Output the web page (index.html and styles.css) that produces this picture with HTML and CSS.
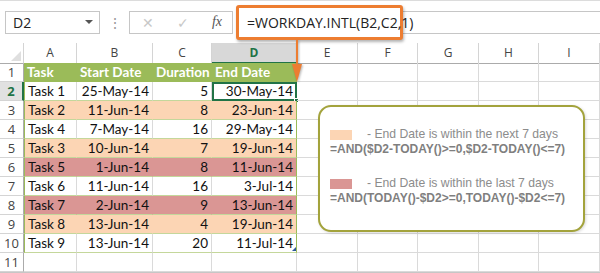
FILE: index.html
```html
<html lang="en">
<head>
    <meta charset="UTF-8">
    <title>WORKDAY.INTL conditional formatting</title>
    <link rel="stylesheet" href="styles.css">
</head>
<body>

    <!-- Formula bar -->
    <div class="formula-bar">
        <div class="name-box">
            <span>D2</span>
            <span class="caret"></span>
        </div>
        <div class="grip">⋮</div>
        <div class="fx-buttons">
            <span class="fx-btn">✕</span>
            <span class="fx-btn">✓</span>
            <span class="fx-btn fx">fx</span>
        </div>
        <div class="formula-input">
            <div class="formula-highlight">=WORKDAY.INTL(B2,C2,1)</div>
        </div>
    </div>

    <!-- Sheet -->
    <div class="sheet">
        <div class="row head-row">
            <div class="corner"><span class="corner-tri"></span></div>
            <div class="col-head">A</div>
            <div class="col-head">B</div>
            <div class="col-head">C</div>
            <div class="col-head active">D</div>
            <div class="col-head">E</div>
            <div class="col-head">F</div>
            <div class="col-head">G</div>
            <div class="col-head">H</div>
            <div class="col-head">I</div>
        </div>

        <div class="row">
            <div class="row-num">1</div>
            <div class="cell th">Task</div>
            <div class="cell th">Start Date</div>
            <div class="cell th">Duration</div>
            <div class="cell th th-last">End Date</div>
            <div class="cell"></div><div class="cell"></div><div class="cell"></div><div class="cell"></div><div class="cell"></div>
        </div>

        <div class="row">
            <div class="row-num active">2</div>
            <div class="cell td first">Task 1</div>
            <div class="cell td num">25-May-14</div>
            <div class="cell td num">5</div>
            <div class="cell td num last selected">30-May-14<span class="handle"></span></div>
            <div class="cell"></div><div class="cell"></div><div class="cell"></div><div class="cell"></div><div class="cell"></div>
        </div>

        <div class="row next">
            <div class="row-num">3</div>
            <div class="cell td first">Task 2</div>
            <div class="cell td num">11-Jun-14</div>
            <div class="cell td num">8</div>
            <div class="cell td num last">23-Jun-14</div>
            <div class="cell"></div><div class="cell"></div><div class="cell"></div><div class="cell"></div><div class="cell"></div>
        </div>

        <div class="row">
            <div class="row-num">4</div>
            <div class="cell td first">Task 4</div>
            <div class="cell td num">7-May-14</div>
            <div class="cell td num">16</div>
            <div class="cell td num last">29-May-14</div>
            <div class="cell"></div><div class="cell"></div><div class="cell"></div><div class="cell"></div><div class="cell"></div>
        </div>

        <div class="row next">
            <div class="row-num">5</div>
            <div class="cell td first">Task 3</div>
            <div class="cell td num">10-Jun-14</div>
            <div class="cell td num">7</div>
            <div class="cell td num last">19-Jun-14</div>
            <div class="cell"></div><div class="cell"></div><div class="cell"></div><div class="cell"></div><div class="cell"></div>
        </div>

        <div class="row last-week">
            <div class="row-num">6</div>
            <div class="cell td first">Task 5</div>
            <div class="cell td num">1-Jun-14</div>
            <div class="cell td num">8</div>
            <div class="cell td num last">11-Jun-14</div>
            <div class="cell"></div><div class="cell"></div><div class="cell"></div><div class="cell"></div><div class="cell"></div>
        </div>

        <div class="row">
            <div class="row-num">7</div>
            <div class="cell td first">Task 6</div>
            <div class="cell td num">11-Jun-14</div>
            <div class="cell td num">16</div>
            <div class="cell td num last">3-Jul-14</div>
            <div class="cell"></div><div class="cell"></div><div class="cell"></div><div class="cell"></div><div class="cell"></div>
        </div>

        <div class="row last-week">
            <div class="row-num">8</div>
            <div class="cell td first">Task 7</div>
            <div class="cell td num">2-Jun-14</div>
            <div class="cell td num">9</div>
            <div class="cell td num last">13-Jun-14</div>
            <div class="cell"></div><div class="cell"></div><div class="cell"></div><div class="cell"></div><div class="cell"></div>
        </div>

        <div class="row next">
            <div class="row-num">9</div>
            <div class="cell td first">Task 8</div>
            <div class="cell td num">13-Jun-14</div>
            <div class="cell td num">4</div>
            <div class="cell td num last">19-Jun-14</div>
            <div class="cell"></div><div class="cell"></div><div class="cell"></div><div class="cell"></div><div class="cell"></div>
        </div>

        <div class="row">
            <div class="row-num">10</div>
            <div class="cell td first">Task 9</div>
            <div class="cell td num">13-Jun-14</div>
            <div class="cell td num">20</div>
            <div class="cell td num last">11-Jul-14<span class="resize"></span></div>
            <div class="cell"></div><div class="cell"></div><div class="cell"></div><div class="cell"></div><div class="cell"></div>
        </div>

        <div class="row">
            <div class="row-num">11</div>
            <div class="cell"></div><div class="cell"></div><div class="cell"></div><div class="cell"></div>
            <div class="cell"></div><div class="cell"></div><div class="cell"></div><div class="cell"></div><div class="cell"></div>
        </div>

        <div class="scrollbar"><span class="thumb"></span></div>
    </div>

    <!-- Arrow from formula to the active cell -->
    <svg class="arrow" width="16" height="46" viewBox="0 0 16 46">
        <line x1="8" y1="0" x2="8" y2="30" stroke="#ed7d31" stroke-width="2"/>
        <polygon points="3,24 13,24 8,42" fill="#ed7d31"/>
    </svg>

    <!-- Legend callout -->
    <div class="callout">
        <div class="legend">
            <div class="legend-line"><span class="swatch peach"></span>- End Date is within the next 7 days</div>
            <div class="legend-formula">=AND($D2-TODAY()&gt;=0,$D2-TODAY()&lt;=7)</div>
        </div>
        <div class="legend">
            <div class="legend-line"><span class="swatch pink"></span>- End Date is within the last 7 days</div>
            <div class="legend-formula">=AND(TODAY()-$D2&gt;=0,TODAY()-$D2&lt;=7)</div>
        </div>
    </div>

</body>
</html>
```

FILE: styles.css
```css
/* Basic Reset */
* {
    margin: 0;
    padding: 0;
    box-sizing: border-box;
}

body {
    width: 600px;
    height: 273px;
    overflow: hidden;
    position: relative;
    background-color: #fff;
    border-top: 1px solid #dcdcdc;
    font-family: "Open Sans", Arial, sans-serif;
}

/* Formula Bar */
.formula-bar {
    display: flex;
    align-items: center;
    height: 42px;
    padding-left: 5px;
}

.name-box {
    display: flex;
    align-items: center;
    justify-content: space-between;
    width: 95px;
    height: 23px;
    border: 1px solid #c6c6c6;
    padding: 0 6px 0 7px;
    font-size: 14px;
    color: #222;
}

.caret {
    width: 0;
    height: 0;
    border-left: 4px solid transparent;
    border-right: 4px solid transparent;
    border-top: 4px solid #555;
}

.grip {
    width: 29px;
    text-align: center;
    color: #999;
    font-size: 14px;
}

.fx-buttons {
    display: flex;
    align-items: center;
    justify-content: space-between;
    width: 104px;
    height: 23px;
    border: 1px solid #c6c6c6;
    padding: 0 10px 0 12px;
}

.fx-btn {
    font-size: 14px;
    color: #c8c8c8;
}

.fx {
    font-family: "Liberation Serif", serif;
    font-style: italic;
    font-size: 14px;
    color: #555;
}

.formula-input {
    flex: 1;
    height: 23px;
    margin-left: 3px;
    border-top: 1px solid #c6c6c6;
    border-bottom: 1px solid #c6c6c6;
    position: relative;
}

.formula-highlight {
    position: absolute;
    left: 0;
    top: -7px;
    width: 167px;
    height: 35px;
    border: 3px solid #ed7d31;
    border-radius: 3px;
    background-color: #fff;
    box-shadow: 1px 2px 3px rgba(0, 0, 0, 0.3);
    padding-left: 8px;
    font-size: 14px;
    line-height: 29px;
    color: #222;
}

/* Sheet Grid */
.row {
    display: grid;
    grid-template-columns: 24px 53px 76px 59px 85px 61px 60px 61px 60px 61px;
    height: 19px;
}

.head-row {
    height: 20px;
}

.corner {
    position: relative;
    border-right: 1px solid #d4d4d4;
    border-bottom: 1px solid #ababab;
}

.corner-tri {
    position: absolute;
    right: 2px;
    bottom: 2px;
    width: 0;
    height: 0;
    border-left: 10px solid transparent;
    border-bottom: 10px solid #dfdfdf;
}

.col-head {
    border-right: 1px solid #d4d4d4;
    border-bottom: 1px solid #ababab;
    text-align: center;
    font-size: 12px;
    line-height: 19px;
    color: #444;
}

.col-head.active {
    background-color: #d8d8d8;
    color: #217346;
    font-weight: bold;
    border-bottom: 2px solid #217346;
}

.row-num {
    border-right: 1px solid #ababab;
    border-bottom: 1px solid #d4d4d4;
    text-align: center;
    font-size: 13px;
    line-height: 18px;
    color: #444;
}

.row-num.active {
    background-color: #e1e1e1;
    color: #217346;
    font-weight: bold;
    border-right: 2px solid #217346;
}

.cell {
    border-right: 1px solid #dadada;
    border-bottom: 1px solid #dadada;
    font-family: Lato, "Liberation Sans", sans-serif;
    font-size: 13.5px;
    line-height: 18px;
    color: #111;
    white-space: nowrap;
    position: relative;
}

/* Table Styling */
.th {
    background-color: #9bbb59;
    color: #fff;
    font-weight: bold;
    border-right: none;
    border-bottom: 1px solid #9bbb59;
    padding-left: 3px;
}

.th-last {
    border-right: 1px solid #9bbb59;
}

.td {
    border-bottom: 1px solid #c4d79b;
    padding: 0 3px;
}

.td.first {
    border-left: 1px solid #9bbb59;
}

.td.last {
    border-right: 1px solid #9bbb59;
}

.num {
    text-align: right;
}

.next .td {
    background-color: #fcd5b4;
    border-right-color: #fcd5b4;
}

.last-week .td {
    background-color: #da9694;
    border-right-color: #da9694;
}

.next .td.last,
.last-week .td.last {
    border-right-color: #9bbb59;
}

.selected {
    outline: 2px solid #217346;
    outline-offset: -2px;
}

.handle {
    position: absolute;
    right: -3px;
    bottom: -3px;
    width: 5px;
    height: 5px;
    background-color: #217346;
    border: 1px solid #fff;
}

.resize {
    position: absolute;
    right: 0;
    bottom: 1px;
    width: 0;
    height: 0;
    border-left: 4px solid transparent;
    border-bottom: 4px solid #2b579a;
}

.scrollbar {
    height: 4px;
    background-color: #f0f0f0;
    border-top: 1px solid #c6c6c6;
    position: relative;
}

.thumb {
    position: absolute;
    left: 140px;
    top: 0;
    width: 420px;
    height: 3px;
    background-color: #dcdcdc;
}

/* Arrow */
.arrow {
    position: absolute;
    left: 289px;
    top: 39px;
    filter: drop-shadow(1px 1px 1px rgba(0, 0, 0, 0.3));
}

/* Callout Styling */
.callout {
    position: absolute;
    left: 318px;
    top: 104px;
    width: 267px;
    height: 127px;
    background-color: #fff;
    border: 2px solid #a3a33c;
    border-radius: 13px;
    box-shadow: 1px 1px 3px rgba(0, 0, 0, 0.15);
    padding: 20px 0 0 10px;
    font-family: "Liberation Sans", Arial, sans-serif;
    color: #8c8c8c;
}

.legend {
    margin-bottom: 19px;
}

.legend-line {
    display: flex;
    align-items: center;
    font-size: 12.2px;
    line-height: 15px;
}

.swatch {
    width: 22px;
    height: 10px;
    margin-right: 15px;
}

.peach {
    background-color: #fcd5b4;
}

.pink {
    background-color: #da9694;
}

.legend-formula {
    font-size: 12px;
    font-weight: bold;
    line-height: 15px;
    color: #7f7f7f;
}
```
